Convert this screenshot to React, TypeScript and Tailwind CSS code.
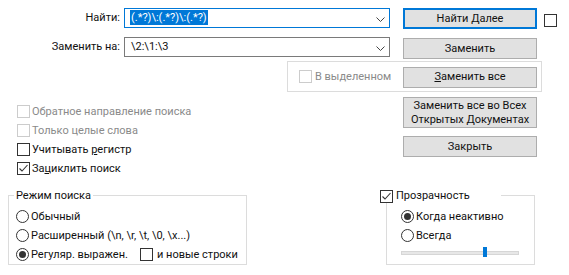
import type { ReactNode } from 'react'

function Check({ checked = false, disabled = false }: { checked?: boolean; disabled?: boolean }) {
  return (
    <span
      className={`flex h-[13px] w-[13px] shrink-0 items-center justify-center border bg-white ${disabled ? 'border-[#cccccc]' : 'border-[#333333]'}`}
    >
      {checked ? (
        <svg width="11" height="11" viewBox="0 0 11 11">
          <path d="M1.5 5.5 L4 8 L9.5 2" fill="none" stroke="#333333" strokeWidth="1.1" />
        </svg>
      ) : null}
    </span>
  )
}

function Radio({ checked = false }: { checked?: boolean }) {
  return (
    <span className="flex h-[13px] w-[13px] shrink-0 items-center justify-center rounded-full border border-[#333333] bg-white">
      {checked ? <span className="h-[7px] w-[7px] rounded-full bg-[#333333]" /> : null}
    </span>
  )
}

function Btn({ children, primary = false, tall = false }: { children: ReactNode; primary?: boolean; tall?: boolean }) {
  return (
    <div
      className={`flex w-[134px] shrink-0 items-center justify-center bg-[#e1e1e1] text-center leading-[14px] ${tall ? 'h-[31px]' : 'h-[21px]'} ${primary ? 'border-2 border-[#0078d7]' : 'border border-[#adadad]'}`}
    >
      {children}
    </div>
  )
}

function Chevron() {
  return (
    <svg width="9" height="5" viewBox="0 0 9 5" className="absolute right-[4px] top-[8px]">
      <path d="M0.5 0.5 L4.5 4.5 L8.5 0.5" fill="none" stroke="#444444" strokeWidth="1" />
    </svg>
  )
}

export default function App() {
  return (
    <div className="h-[275px] w-[569px] overflow-hidden whitespace-nowrap bg-white pt-[8px] font-['Roboto',sans-serif] text-[11px] leading-[14px] text-[#111111]">
      {/* find */}
      <div className="flex h-[21px] items-start">
        <div className="w-[120px] text-right leading-[20px]">Найти:</div>
        <div className="relative ml-[4px] h-[20px] w-[266px] border border-[#0078d7] pl-[5px] leading-[18px]">
          <span className="bg-[#0078d7] px-[1px] py-[1px] text-white">(.*?)\:(.*?)\:(.*?)</span>
          <Chevron />
        </div>
        <div className="ml-[13px]">
          <Btn primary>Найти Далее</Btn>
        </div>
        <div className="ml-[7px] mt-[6px]">
          <Check />
        </div>
      </div>

      {/* replace */}
      <div className="mt-[8px] flex h-[21px] items-start">
        <div className="w-[120px] text-right leading-[20px]">Заменить на:</div>
        <div className="relative ml-[4px] h-[20px] w-[266px] border border-[#7a7a7a] pl-[6px] leading-[18px]">
          \2:\1:\3
          <Chevron />
        </div>
        <div className="ml-[13px] mt-[1px]">
          <Btn>Заменить</Btn>
        </div>
      </div>

      {/* in selection */}
      <div className="ml-[287px] mt-[3px] flex h-[31px] w-[255px] items-center border border-[#dcdcdc]">
        <div className="ml-[11px] flex w-[104px] items-center gap-[3px] text-[#8a8a8a]">
          <Check disabled />
          <span>В выделенном</span>
        </div>
        <div className="mt-[1px]">
          <Btn>
            <span>
              <span className="underline">З</span>аменить все
            </span>
          </Btn>
        </div>
      </div>

      {/* options + more buttons */}
      <div className="mt-[5px] flex h-[82px]">
        <div className="flex w-[403px] flex-col pl-[17px] pt-[5px]">
          <div className="flex h-[19px] items-center gap-[2px] text-[#8a8a8a]">
            <Check disabled />
            <span>Обратное направление поиска</span>
          </div>
          <div className="flex h-[19px] items-center gap-[2px] text-[#8a8a8a]">
            <Check disabled />
            <span>Только целые слова</span>
          </div>
          <div className="flex h-[19px] items-center gap-[2px]">
            <Check />
            <span>
              Учитывать <span className="underline">р</span>егистр
            </span>
          </div>
          <div className="flex h-[19px] items-center gap-[2px]">
            <Check checked />
            <span>
              За<span className="underline">ц</span>иклить поиск
            </span>
          </div>
        </div>
        <div className="flex flex-col gap-[8px]">
          <Btn tall>
            <span>
              Заменить все во Всех
              <br />
              Открытых <span className="underline">Д</span>окументах
            </span>
          </Btn>
          <Btn>Закрыть</Btn>
        </div>
      </div>

      {/* bottom groups */}
      <div className="mt-[16px] flex">
        <div className="relative ml-[8px] h-[70px] w-[239px] border border-[#dcdcdc] pl-[7px] pt-[11px]">
          <span className="absolute left-[5px] top-[-8px] bg-white px-[2px] leading-[16px]">Режим поиска</span>
          <div className="flex h-[19px] items-center gap-[2px]">
            <Radio />
            <span>Обычный</span>
          </div>
          <div className="flex h-[19px] items-center gap-[2px]">
            <Radio />
            <span>Расширенный (\n, \r, \t, \0, \x...)</span>
          </div>
          <div className="flex h-[19px] items-center gap-[2px]">
            <Radio checked />
            <span className="w-[107px]">Регуляр. выражен.</span>
            <Check />
            <span className="ml-[2px]">и новые строки</span>
          </div>
        </div>

        <div className="relative ml-[139px] h-[70px] w-[149px] border border-[#dcdcdc] pl-[14px] pt-[11px]">
          <div className="absolute left-[-7px] top-[-7px] flex w-[121px] items-center gap-[3px] bg-white leading-[14px]">
            <Check checked />
            <span>Прозрачность</span>
          </div>
          <div className="flex h-[19px] items-center gap-[2px]">
            <Radio checked />
            <span>Когда неактивно</span>
          </div>
          <div className="flex h-[19px] items-center gap-[2px]">
            <Radio />
            <span>Всегда</span>
          </div>
          <div className="relative mt-[6px] h-[4px] w-[118px] border border-[#d6d6d6] bg-[#e7e7e7]">
            <span className="absolute left-[81px] top-[-5px] h-[10px] w-[4px] bg-[#0078d7]" />
          </div>
        </div>
      </div>
    </div>
  )
}
